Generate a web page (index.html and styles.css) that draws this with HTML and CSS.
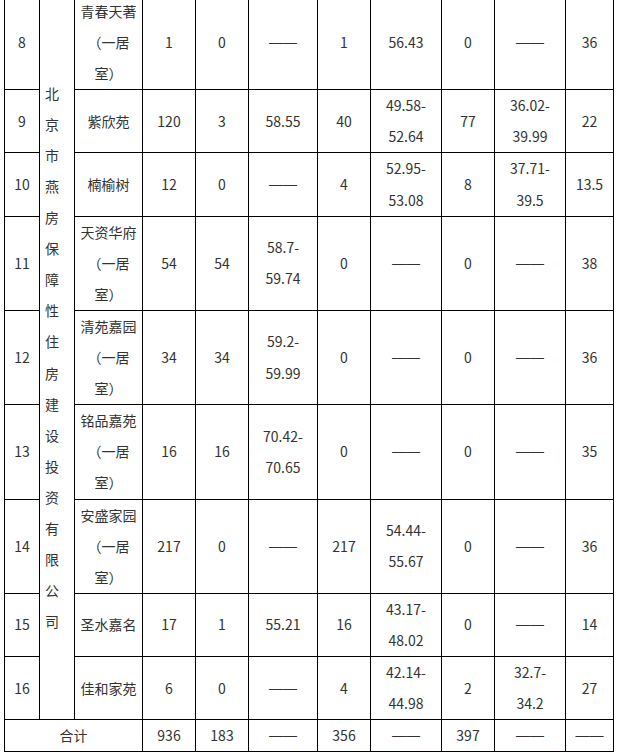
FILE: index.html
```html
<!DOCTYPE html>
<html lang="zh-CN">
<head>
<meta charset="utf-8">
<title>保障性住房房源表</title>
<link rel="stylesheet" href="styles.css">
</head>
<body>
<table class="grid">
  <colgroup>
    <col class="c-no">
    <col class="c-org">
    <col class="c-name">
    <col class="c-n1">
    <col class="c-n2">
    <col class="c-a1">
    <col class="c-n3">
    <col class="c-a2">
    <col class="c-n4">
    <col class="c-a3">
    <col class="c-rent">
  </colgroup>
  <tbody>
    <tr>
      <td>8</td>
      <td class="org" rowspan="9">北京市燕房保障性住房建设投资有限公司</td>
      <td>青春天著<br>（一居<br>室）</td>
      <td>1</td><td>0</td><td class="dash">——</td><td>1</td><td>56.43</td><td>0</td><td class="dash">——</td><td>36</td>
    </tr>
    <tr>
      <td>9</td>
      <td>紫欣苑</td>
      <td>120</td><td>3</td><td>58.55</td><td>40</td><td>49.58-<br>52.64</td><td>77</td><td>36.02-<br>39.99</td><td>22</td>
    </tr>
    <tr>
      <td>10</td>
      <td>楠榆树</td>
      <td>12</td><td>0</td><td class="dash">——</td><td>4</td><td>52.95-<br>53.08</td><td>8</td><td>37.71-<br>39.5</td><td>13.5</td>
    </tr>
    <tr>
      <td>11</td>
      <td>天资华府<br>（一居<br>室）</td>
      <td>54</td><td>54</td><td>58.7-<br>59.74</td><td>0</td><td class="dash">——</td><td>0</td><td class="dash">——</td><td>38</td>
    </tr>
    <tr>
      <td>12</td>
      <td>清苑嘉园<br>（一居<br>室）</td>
      <td>34</td><td>34</td><td>59.2-<br>59.99</td><td>0</td><td class="dash">——</td><td>0</td><td class="dash">——</td><td>36</td>
    </tr>
    <tr>
      <td>13</td>
      <td>铭品嘉苑<br>（一居<br>室）</td>
      <td>16</td><td>16</td><td>70.42-<br>70.65</td><td>0</td><td class="dash">——</td><td>0</td><td class="dash">——</td><td>35</td>
    </tr>
    <tr>
      <td>14</td>
      <td>安盛家园<br>（一居<br>室）</td>
      <td>217</td><td>0</td><td class="dash">——</td><td>217</td><td>54.44-<br>55.67</td><td>0</td><td class="dash">——</td><td>36</td>
    </tr>
    <tr>
      <td>15</td>
      <td>圣水嘉名</td>
      <td>17</td><td>1</td><td>55.21</td><td>16</td><td>43.17-<br>48.02</td><td>0</td><td class="dash">——</td><td>14</td>
    </tr>
    <tr>
      <td>16</td>
      <td>佳和家苑</td>
      <td>6</td><td>0</td><td class="dash">——</td><td>4</td><td>42.14-<br>44.98</td><td>2</td><td>32.7-<br>34.2</td><td>27</td>
    </tr>
    <tr>
      <td colspan="3">合计</td>
      <td>936</td><td>183</td><td class="dash">——</td><td>356</td><td class="dash">——</td><td>397</td><td class="dash">——</td><td class="dash">——</td>
    </tr>
  </tbody>
</table>
</body>
</html>
```

FILE: styles.css
```css
html, body {
  margin: 0;
  padding: 0;
  background: #ffffff;
}

body {
  font-family: "Noto Sans CJK SC", "Noto Sans", sans-serif;
  font-size: 14px;
  color: #333333;
}

.grid {
  border-collapse: collapse;
  table-layout: fixed;
  width: 610px;
  margin: -5px 0 0 4px;
}

.grid td {
  border: 1px solid #000000;
  padding: 0 5px;
  line-height: 31.1px;
  text-align: center;
  vertical-align: middle;
  white-space: nowrap;
}

.grid td.org {
  white-space: normal;
  text-align: left;
  word-break: break-all;
}

.grid td.dash {
  font-family: "Liberation Sans", "DejaVu Sans", sans-serif;
}

.c-no { width: 35px; }
.c-org { width: 35px; }
.c-name { width: 68px; }
.c-n1 { width: 53px; }
.c-n2 { width: 53px; }
.c-a1 { width: 69px; }
.c-n3 { width: 53px; }
.c-a2 { width: 71px; }
.c-n4 { width: 53px; }
.c-a3 { width: 71px; }
.c-rent { width: 48px; }
```
